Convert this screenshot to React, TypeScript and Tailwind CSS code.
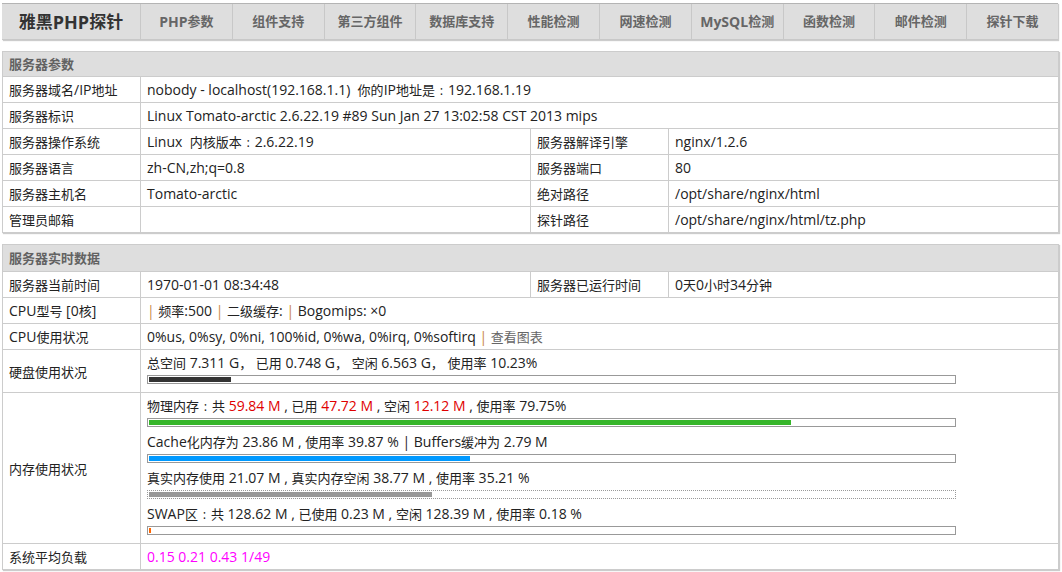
import type { ReactNode } from "react";

// CJK runs are set one pixel smaller than the latin text around them
const cjkRun = /([\u2e80-\u9fff\u3000-\u303f\uff00-\uffef]+)/;

function Cjk({ s, cls }: { s: string; cls: string }) {
  // full-width colon sits centred in its cell, as in YaHei
  const parts = s.split("：");
  return (
    <span className={cls}>
      {parts.map((p, i) => (
        <span key={i}>
          {i > 0 && <span className="inline-block w-[13px] text-center">:</span>}
          {p}
        </span>
      ))}
    </span>
  );
}

function T({ s, cjk = "text-[13px] leading-none" }: { s: string; cjk?: string }) {
  return <>{s.split(cjkRun).map((part, i) => (i % 2 ? <Cjk key={i} s={part} cls={cjk} /> : part))}</>;
}

const navItems = ["PHP参数", "组件支持", "第三方组件", "数据库支持", "性能检测", "网速检测", "MySQL检测", "函数检测", "邮件检测", "探针下载"];

const td = "border border-[#ccc] px-[6px] py-[3px] align-middle leading-[19px]";

const Pipe = () => <span className="text-[#c9874a]">|</span>;

const Red = ({ children }: { children: string }) => <span className="text-[#e00000]">{children}</span>;

function Bar({ pct, fill, dotted }: { pct: number; fill: string; dotted?: boolean }) {
  return (
    <div
      className={
        dotted
          ? "mt-[2px] mb-[5px] h-[9px] w-[809px] overflow-hidden border border-dotted border-[#999] bg-white p-px"
          : "mt-[2px] mb-[5px] h-[9px] w-[809px] overflow-hidden border border-[#999] bg-white p-px"
      }
    >
      <div className={`h-[5px] ${fill}`} style={{ width: `${pct}%` }} />
    </div>
  );
}

function Section({ title, tall, children }: { title: string; tall?: boolean; children: ReactNode }) {
  return (
    <table className="w-[1056px] table-fixed border-collapse shadow-[1px_1px_1px_#ccc]">
      <colgroup>
        <col className="w-[138px]" />
        <col className="w-[390px]" />
        <col className="w-[138px]" />
        <col className="w-[390px]" />
      </colgroup>
      <thead>
        <tr>
          <th
            colSpan={4}
            className={
              tall
                ? "border border-[#ccc] bg-[#dedede] px-[6px] py-[3px] text-left text-[13px] font-bold leading-[20px] text-[#626262]"
                : "border border-[#ccc] bg-[#dedede] px-[6px] py-[3px] text-left text-[13px] font-bold leading-[18px] text-[#626262]"
            }
          >
            {title}
          </th>
        </tr>
      </thead>
      <tbody>{children}</tbody>
    </table>
  );
}

function Row({ label, children }: { label: string; children: ReactNode }) {
  return (
    <tr>
      <td className={td}>
        <T s={label} />
      </td>
      <td className={td} colSpan={3}>
        {children}
      </td>
    </tr>
  );
}

function Row4({ a, b, c, d }: { a: string; b: string; c: string; d: string }) {
  return (
    <tr>
      <td className={td}>
        <T s={a} />
      </td>
      <td className={td}>
        <T s={b} />
      </td>
      <td className={td}>
        <T s={c} />
      </td>
      <td className={td}>
        <T s={d} />
      </td>
    </tr>
  );
}

export default function App() {
  return (
    <div className="min-h-[572px] bg-white pl-[2px] pt-[3px] font-['Open_Sans','Noto_Sans_CJK_SC',sans-serif] text-[14px] text-[#222]">
      <nav className="flex h-[37px] w-[1056px] border-t border-b border-t-[#b4b4b4] border-b-[#c8c8c8] bg-[#dedede] shadow-[1px_1px_1px_#ccc]">
        <div className="flex w-[138px] items-center justify-center text-[18px] font-bold leading-none text-[#333]">
          <T s="雅黑PHP探针" cjk="text-[17px] leading-none" />
        </div>
        {navItems.map((item) => (
          <a key={item} href="#" className="flex flex-1 items-center justify-center border-l border-[#c8c8c8] font-bold leading-none text-[#666]">
            <T s={item} />
          </a>
        ))}
      </nav>

      <div className="mt-[11px]">
        <Section title="服务器参数">
          <Row label="服务器域名/IP地址">
            <T s={"nobody - localhost(192.168.1.1)\u00a0\u00a0你的IP地址是：192.168.1.19"} />
          </Row>
          <Row label="服务器标识">Linux Tomato-arctic 2.6.22.19 #89 Sun Jan 27 13:02:58 CST 2013 mips</Row>
          <Row4 a="服务器操作系统" b={"Linux\u00a0\u00a0内核版本：2.6.22.19"} c="服务器解译引擎" d="nginx/1.2.6" />
          <Row4 a="服务器语言" b="zh-CN,zh;q=0.8" c="服务器端口" d="80" />
          <Row4 a="服务器主机名" b="Tomato-arctic" c="绝对路径" d="/opt/share/nginx/html" />
          <Row4 a="管理员邮箱" b="" c="探针路径" d="/opt/share/nginx/html/tz.php" />
        </Section>
      </div>

      <div className="mt-[11px]">
        <Section title="服务器实时数据" tall>
          <Row4 a="服务器当前时间" b="1970-01-01 08:34:48" c="服务器已运行时间" d="0天0小时34分钟" />
          <Row label="CPU型号 [0核]">
            <Pipe /> <T s="频率:500" /> <Pipe /> <T s="二级缓存:" /> <Pipe /> Bogomips: ×0
          </Row>
          <Row label="CPU使用状况">
            0%us, 0%sy, 0%ni, 100%id, 0%wa, 0%irq, 0%softirq <Pipe />{" "}
            <span className="text-[13px] leading-none text-[#666]">查看图表</span>
          </Row>
          <Row label="硬盘使用状况">
            <div className="leading-[20px]">
              <T s="总空间 7.311 G， 已用 0.748 G， 空闲 6.563 G， 使用率 10.23%" />
            </div>
            <Bar pct={10.23} fill="bg-[#333]" />
          </Row>
          <Row label="内存使用状况">
            <div className="leading-[20px]">
              <T s="物理内存：共 " />
              <Red>59.84 M</Red> , <T s="已用 " />
              <Red>47.72 M</Red> , <T s="空闲 " />
              <Red>12.12 M</Red> , <T s="使用率 79.75%" />
            </div>
            <Bar pct={79.75} fill="bg-[#36b52a]" />
            <div className="leading-[20px]">
              <T s="Cache化内存为 23.86 M , 使用率 39.87 % | Buffers缓冲为 2.79 M" />
            </div>
            <Bar pct={39.87} fill="bg-[#0099ff]" />
            <div className="leading-[20px]">
              <T s="真实内存使用 21.07 M , 真实内存空闲 38.77 M , 使用率 35.21 %" />
            </div>
            <Bar pct={35.21} fill="bg-[#999]" dotted />
            <div className="leading-[20px]">
              <T s="SWAP区：共 128.62 M , 已使用 0.23 M , 空闲 128.39 M , 使用率 0.18 %" />
            </div>
            <Bar pct={0.3} fill="bg-[#ff6600]" />
          </Row>
          <Row label="系统平均负载">
            <span className="text-[#ff00ff]">0.15 0.21 0.43 1/49</span>
          </Row>
        </Section>
      </div>
    </div>
  );
}
